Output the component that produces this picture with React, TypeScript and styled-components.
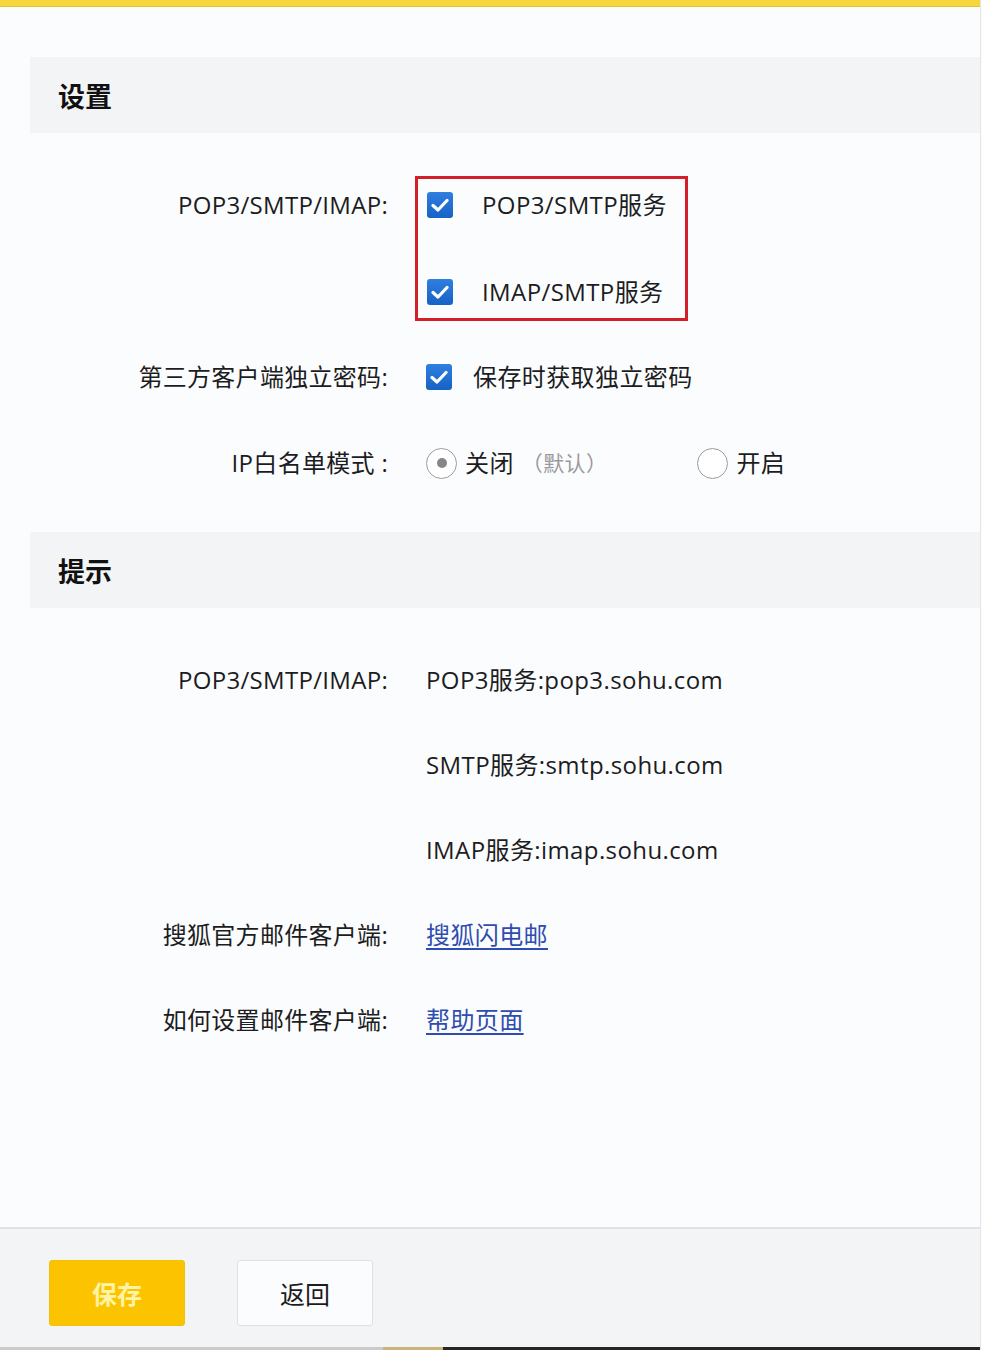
import React from "react";
import styled, { createGlobalStyle } from "styled-components";

const GlobalStyle = createGlobalStyle`
  html, body {
    margin: 0;
    padding: 0;
    background: #fbfcfd;
  }
  body {
    font-family: "Open Sans", "Noto Sans CJK SC", sans-serif;
    color: #1c1c22;
  }
`;

const Page = styled.div`
  width: 981px;
  min-height: 1350px;
  display: flex;
  flex-direction: column;
  background: #fbfcfd;
  border-right: 1px solid #e4e6ea;
  box-sizing: border-box;
`;

const TopBar = styled.div`
  height: 6px;
  background: #f7d53c;
  border-bottom: 1px solid #e2c23a;
`;

const Main = styled.div`
  flex: 1;
  display: flex;
  flex-direction: column;
  padding-top: 50px;
`;

const SectionHeader = styled.div`
  margin-left: 30px;
  height: 76px;
  display: flex;
  align-items: center;
  padding-left: 28px;
  background: #f3f4f6;
  font-size: 27px;
  font-weight: 700;
  color: #111;
`;

const Form = styled.div<{ $top: number }>`
  display: flex;
  flex-direction: column;
  padding-top: ${(p) => p.$top}px;
`;

const Row = styled.div<{ $height?: number; $top?: boolean }>`
  display: grid;
  grid-template-columns: 388px 1fr;
  column-gap: 38px;
  align-items: ${(p) => (p.$top ? "start" : "center")};
  height: ${(p) => (p.$height ? `${p.$height}px` : "auto")};
`;

const Label = styled.div<{ $offset?: number }>`
  text-align: right;
  font-size: 24px;
  letter-spacing: 0.3px;
  line-height: 40px;
  margin-top: ${(p) => p.$offset ?? 0}px;
  white-space: nowrap;
`;

const Value = styled.div`
  display: flex;
  align-items: center;
  font-size: 24px;
  letter-spacing: 0.4px;
  line-height: 40px;
  white-space: nowrap;
`;

const Highlight = styled.div`
  margin-left: -11px;
  width: 273px;
  box-sizing: border-box;
  border: 3px solid #d41f2b;
  padding: 6px 0 6px 9px;
  display: flex;
  flex-direction: column;
  gap: 47px;
`;

const CheckLine = styled.div<{ $gap: number }>`
  display: flex;
  align-items: center;
  gap: ${(p) => p.$gap}px;
  font-size: 24px;
  letter-spacing: 0.4px;
  line-height: 40px;
  white-space: nowrap;
`;

const Box = styled.span`
  width: 26px;
  height: 26px;
  border-radius: 3px;
  background: linear-gradient(#2f7fe0, #1762c4);
  display: inline-flex;
  align-items: center;
  justify-content: center;
  flex-shrink: 0;
`;

const RadioGroup = styled.div`
  display: flex;
  align-items: center;
`;

const Radio = styled.span<{ $checked?: boolean }>`
  width: 31px;
  height: 31px;
  border-radius: 50%;
  border: 1.5px solid #9b9ca0;
  box-sizing: border-box;
  background: #fff;
  display: inline-flex;
  align-items: center;
  justify-content: center;
  margin-right: 8px;

  &::after {
    content: "";
    width: 10px;
    height: 10px;
    border-radius: 50%;
    background: ${(p) => (p.$checked ? "#85858a" : "transparent")};
  }
`;

const Hint = styled.span`
  color: #9a9a9e;
  font-size: 21px;
  margin-left: 8px;
  margin-right: 90px;
`;

const Link = styled.a`
  color: #2f4db0;
  text-decoration: underline;
  text-underline-offset: 4px;
  cursor: pointer;
`;

const Footer = styled.div`
  height: 120px;
  box-sizing: border-box;
  border-top: 2px solid #dfe3e8;
  background: #f3f4f6;
  display: flex;
  align-items: flex-start;
  gap: 52px;
  padding: 31px 0 0 49px;
`;

const Button = styled.button<{ $primary?: boolean }>`
  width: 136px;
  height: 66px;
  border-radius: 3px;
  font-family: inherit;
  font-size: 25px;
  cursor: pointer;
  background: ${(p) => (p.$primary ? "#fbc300" : "#fbfcfe")};
  color: ${(p) => (p.$primary ? "#fff3a6" : "#1c1c22")};
  border: 1px solid ${(p) => (p.$primary ? "#f2c20a" : "#dde1e6")};
  font-weight: ${(p) => (p.$primary ? 700 : 400)};
`;

const BottomEdge = styled.div`
  height: 3px;
  display: grid;
  grid-template-columns: 383px 60px 1fr;
`;

const EdgePart = styled.div<{ $color: string }>`
  background: ${(p) => p.$color};
`;

const Spacer = styled.div<{ $h: number }>`
  height: ${(p) => p.$h}px;
`;

const Check = () => (
  <Box>
    <svg width="18" height="14" viewBox="0 0 18 14">
      <path
        d="M2 7.5 L7 12 L16 2.5"
        fill="none"
        stroke="#fff"
        strokeWidth="3.2"
        strokeLinecap="round"
        strokeLinejoin="round"
      />
    </svg>
  </Box>
);

const hostRows = [
  "POP3服务:pop3.sohu.com",
  "SMTP服务:smtp.sohu.com",
  "IMAP服务:imap.sohu.com",
];

const App = () => {
  return (
    <>
      <GlobalStyle />
      <Page>
        <TopBar />
        <Main>
          <SectionHeader>设置</SectionHeader>
          <Form $top={43}>
            <Row $top>
              <Label $offset={9}>POP3/SMTP/IMAP:</Label>
              <Highlight>
                <CheckLine $gap={29}>
                  <Check />
                  POP3/SMTP服务
                </CheckLine>
                <CheckLine $gap={29}>
                  <Check />
                  IMAP/SMTP服务
                </CheckLine>
              </Highlight>
            </Row>
            <Spacer $h={13} />
            <Row $height={86}>
              <Label>第三方客户端独立密码:</Label>
              <CheckLine $gap={21}>
                <Check />
                保存时获取独立密码
              </CheckLine>
            </Row>
            <Row $height={86}>
              <Label>IP白名单模式 :</Label>
              <Value>
                <RadioGroup>
                  <Radio $checked />
                  关闭
                  <Hint>（默认）</Hint>
                </RadioGroup>
                <RadioGroup>
                  <Radio />
                  开启
                </RadioGroup>
              </Value>
            </Row>
          </Form>

          <Spacer $h={26} />
          <SectionHeader>提示</SectionHeader>
          <Form $top={29}>
            {hostRows.map((text, i) => (
              <Row key={text} $height={85}>
                <Label>{i === 0 ? "POP3/SMTP/IMAP:" : ""}</Label>
                <Value>{text}</Value>
              </Row>
            ))}
            <Row $height={85}>
              <Label>搜狐官方邮件客户端:</Label>
              <Value>
                <Link>搜狐闪电邮</Link>
              </Value>
            </Row>
            <Row $height={85}>
              <Label>如何设置邮件客户端:</Label>
              <Value>
                <Link>帮助页面</Link>
              </Value>
            </Row>
          </Form>
        </Main>
        <Footer>
          <Button $primary>保存</Button>
          <Button>返回</Button>
        </Footer>
        <BottomEdge>
          <EdgePart $color="#c9cacc" />
          <EdgePart $color="#c9b47a" />
          <EdgePart $color="#2a2420" />
        </BottomEdge>
      </Page>
    </>
  );
};

export default App;
